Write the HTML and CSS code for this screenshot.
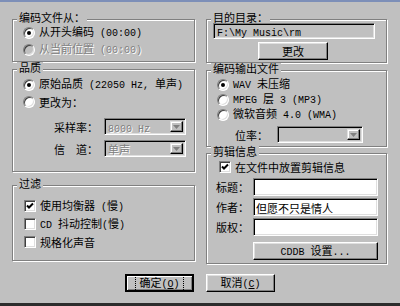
FILE: index.html
```html
<!DOCTYPE html>
<html lang="zh-CN">
<head>
    <meta charset="UTF-8">
    <title>编码选项</title>
    <link rel="stylesheet" href="styles.css">
</head>
<body>
    <div class="dialog">
        <div class="columns">
            <!-- Left column: source, quality, filters -->
            <div class="col col-left">
                <div class="group g-source">
                    <div class="group-title">编码文件从：</div>
                    <div class="opt"><span class="radio on"></span><span>从开头编码<span class="en"> (00:00)</span></span></div>
                    <div class="opt disabled"><span class="radio"></span><span>从当前位置<span class="en"> (00:00)</span></span></div>
                </div>

                <div class="group g-quality">
                    <div class="group-title">品质</div>
                    <div class="opt first"><span class="radio on"></span><span>原始品质<span class="en"> (22050 Hz, </span>单声<span class="en">)</span></span></div>
                    <div class="opt"><span class="radio"></span><span>更改为：</span></div>
                    <div class="field first">
                        <span class="field-label">采样率：</span>
                        <div class="select w-rate">
                            <span class="select-text disabled"><span class="en">8000 Hz</span></span>
                            <span class="select-btn"><svg width="7" height="4" viewBox="0 0 7 4"><polygon points="0,0 7,0 3.5,4"/></svg></span>
                        </div>
                    </div>
                    <div class="field">
                        <span class="field-label">信　道：</span>
                        <div class="select w-rate">
                            <span class="select-text disabled">单声</span>
                            <span class="select-btn"><svg width="7" height="4" viewBox="0 0 7 4"><polygon points="0,0 7,0 3.5,4"/></svg></span>
                        </div>
                    </div>
                </div>

                <div class="group g-filter">
                    <div class="group-title">过滤</div>
                    <div class="check-row first"><span class="check"><svg width="8" height="8" viewBox="0 0 8 8"><polyline points="1,3.5 3,5.5 7,1.5" /></svg></span><span>使用均衡器<span class="en"> (</span>慢<span class="en">)</span></span></div>
                    <div class="check-row"><span class="check"></span><span><span class="en">CD </span>抖动控制<span class="en">(</span>慢<span class="en">)</span></span></div>
                    <div class="check-row"><span class="check"></span><span>规格化声音</span></div>
                </div>
            </div>

            <!-- Right column: target, output format, tags -->
            <div class="col col-right">
                <div class="group g-target">
                    <div class="group-title">目的目录：</div>
                    <div class="textbox readonly dir"><span class="en">F:\My Music\rm</span></div>
                    <div class="button change">更改</div>
                </div>

                <div class="group g-output">
                    <div class="group-title">编码输出文件</div>
                    <div class="opt small first"><span class="radio on"></span><span><span class="en">WAV </span>未压缩</span></div>
                    <div class="opt small"><span class="radio"></span><span><span class="en">MPEG </span>层<span class="en"> 3 (MP3)</span></span></div>
                    <div class="opt small"><span class="radio"></span><span>微软音频<span class="en"> 4.0 (WMA)</span></span></div>
                    <div class="field bitrate">
                        <span class="field-label">位率：</span>
                        <div class="select w-bitrate">
                            <span class="select-text"></span>
                            <span class="select-btn"><svg width="7" height="4" viewBox="0 0 7 4"><polygon points="0,0 7,0 3.5,4"/></svg></span>
                        </div>
                    </div>
                </div>

                <div class="group g-tags">
                    <div class="group-title">剪辑信息</div>
                    <div class="check-row tag-check"><span class="check"><svg width="8" height="8" viewBox="0 0 8 8"><polyline points="1,3.5 3,5.5 7,1.5" /></svg></span><span>在文件中放置剪辑信息</span></div>
                    <div class="tag-row first"><span class="tag-label">标题：</span><div class="textbox tag-input"></div></div>
                    <div class="tag-row"><span class="tag-label">作者：</span><div class="textbox tag-input">但愿不只是情人</div></div>
                    <div class="tag-row"><span class="tag-label">版权：</span><div class="textbox tag-input"></div></div>
                    <div class="button cddb"><span><span class="en">CDDB </span>设置<span class="en">...</span></span></div>
                </div>
            </div>
        </div>

        <!-- Dialog buttons -->
        <div class="buttons">
            <div class="button default"><span class="focus">确定<span class="en">(<u>O</u>)</span></span></div>
            <div class="button"><span>取消<span class="en">(<u>C</u>)</span></span></div>
        </div>
    </div>
</body>
</html>
```

FILE: styles.css
```css
/* Page and dialog frame */
body {
    margin: 0;
    background: #c0c0c0;
    font: 11px/12px "Noto Sans CJK SC", sans-serif;
    color: #000;
}

.dialog {
    width: 400px;
    height: 306px;
    box-sizing: border-box;
    border-top: 2px solid #7d8fb8;
    border-bottom: 3px solid #2c2c2c;
    display: flex;
    flex-direction: column;
}

.en {
    font-family: "Liberation Mono", monospace;
    font-size: 10px;
    white-space: pre;
}

.disabled {
    color: #808080;
    text-shadow: 1px 1px 0 #fff;
}

/* Two columns of group boxes */
.columns {
    display: flex;
    gap: 11px;
    padding: 17px 0 0 12px;
}

.col {
    display: flex;
    flex-direction: column;
}

.col-left { width: 183px; }
.col-right { width: 181px; }

/* Etched group box */
.group {
    border: 1px solid #808080;
    box-shadow: inset 1px 1px 0 #fff, 1px 1px 0 #fff;
}

.group-title {
    width: fit-content;
    height: 11px;
    line-height: 11px;
    margin: -8px 0 1px 4px;
    padding: 0 2px;
    background: #c0c0c0;
    white-space: nowrap;
}

.g-source { padding-bottom: 3px; }
.g-quality { margin-top: 7px; padding-bottom: 14px; }
.g-filter { margin-top: 13px; padding-bottom: 9px; }
.g-target { padding-bottom: 2px; }
.g-output { margin-top: 7px; padding-bottom: 3px; }
.g-tags { margin-top: 6px; padding-bottom: 3px; }

/* Radio options */
.opt {
    display: flex;
    align-items: center;
    height: 17px;
    padding-left: 10px;
    white-space: nowrap;
}

.opt.small { height: 15px; }
.g-quality .opt.first { margin-top: 3px; }
.g-output .opt.first { margin-top: 3px; }

.radio {
    width: 12px;
    height: 12px;
    box-sizing: border-box;
    margin-right: 4px;
    border-radius: 50%;
    border: 1px solid;
    border-color: #808080 #fff #fff #808080;
    box-shadow: inset 1px 1px 0 #404040, inset -1px -1px 0 #dfdfdf;
    background: #fff;
    display: flex;
    align-items: center;
    justify-content: center;
    flex: none;
}

.radio.on::after {
    content: "";
    width: 4px;
    height: 4px;
    border-radius: 50%;
    background: #000;
}

.disabled .radio {
    background: #c0c0c0;
}

/* Check boxes */
.check-row {
    display: flex;
    align-items: center;
    height: 18px;
    padding-left: 11px;
    white-space: nowrap;
}

.g-filter .check-row.first { margin-top: 8px; }

.tag-check {
    height: 17px;
    margin-top: 1px;
    padding-left: 12px;
}

.check {
    width: 12px;
    height: 12px;
    box-sizing: border-box;
    margin-right: 4px;
    border: 1px solid;
    border-color: #808080 #fff #fff #808080;
    box-shadow: inset 1px 1px 0 #404040, inset -1px -1px 0 #dfdfdf;
    background: #fff;
    display: flex;
    align-items: center;
    justify-content: center;
    flex: none;
}

.check polyline {
    fill: none;
    stroke: #000;
    stroke-width: 2;
}

/* Sunken text boxes and drop-down lists */
.textbox, .select {
    box-sizing: border-box;
    border: 1px solid;
    border-color: #808080 #fff #fff #808080;
    box-shadow: inset 1px 1px 0 #000, inset -1px -1px 0 #dfdfdf;
    background: #fff;
    white-space: nowrap;
}

.textbox.readonly { background: #c0c0c0; }

.dir {
    width: 162px;
    height: 16px;
    margin: -1px 0 0 6px;
    padding: 1px 3px;
    line-height: 13px;
}

.field {
    display: flex;
    align-items: center;
    height: 17px;
    padding-left: 41px;
}

.field.first { margin-top: 8px; }
.field + .field { margin-top: 5px; }

.field-label {
    width: 50px;
    flex: none;
}

.select {
    height: 17px;
    display: flex;
    padding: 2px;
    background: #c0c0c0;
}

.w-rate { width: 82px; }
.w-bitrate { width: 86px; }

.bitrate {
    margin-top: 4px;
    padding-left: 28px;
}

.bitrate .field-label { width: 42px; }

.select-text {
    flex: 1;
    line-height: 13px;
    padding-left: 1px;
}

.select-btn {
    width: 13px;
    box-sizing: border-box;
    border: 1px solid;
    border-color: #dfdfdf #000 #000 #dfdfdf;
    box-shadow: inset -1px -1px 0 #808080, inset 1px 1px 0 #fff;
    display: flex;
    align-items: center;
    justify-content: center;
}

.select-btn polygon {
    fill: #808080;
}

/* Tag rows */
.tag-row {
    display: flex;
    align-items: center;
    padding-left: 9px;
}

.tag-row.first { margin-top: 3px; }
.tag-row + .tag-row { margin-top: 2px; }

.tag-label {
    width: 37px;
    flex: none;
}

.tag-input {
    width: 125px;
    height: 18px;
    padding: 2px 2px;
    line-height: 14px;
}

/* Raised push buttons */
.button {
    box-sizing: border-box;
    height: 18px;
    border: 1px solid;
    border-color: #fff #000 #000 #fff;
    box-shadow: inset -1px -1px 0 #808080, inset 1px 1px 0 #dfdfdf;
    display: flex;
    align-items: center;
    justify-content: center;
    white-space: nowrap;
}

.change {
    width: 70px;
    margin: 3px 0 0 51px;
}

.cddb {
    width: 125px;
    margin: 6px 0 0 46px;
}

.buttons {
    display: flex;
    justify-content: center;
    gap: 12px;
    margin-top: 10px;
}

.buttons .button {
    width: 69px;
}

.button.default {
    border: 2px solid #000;
    box-shadow: inset 1px 1px 0 #fff, inset -1px -1px 0 #808080;
}

.focus {
    padding: 0 3px;
    outline: 1px dotted #000;
    outline-offset: 0;
}
```
